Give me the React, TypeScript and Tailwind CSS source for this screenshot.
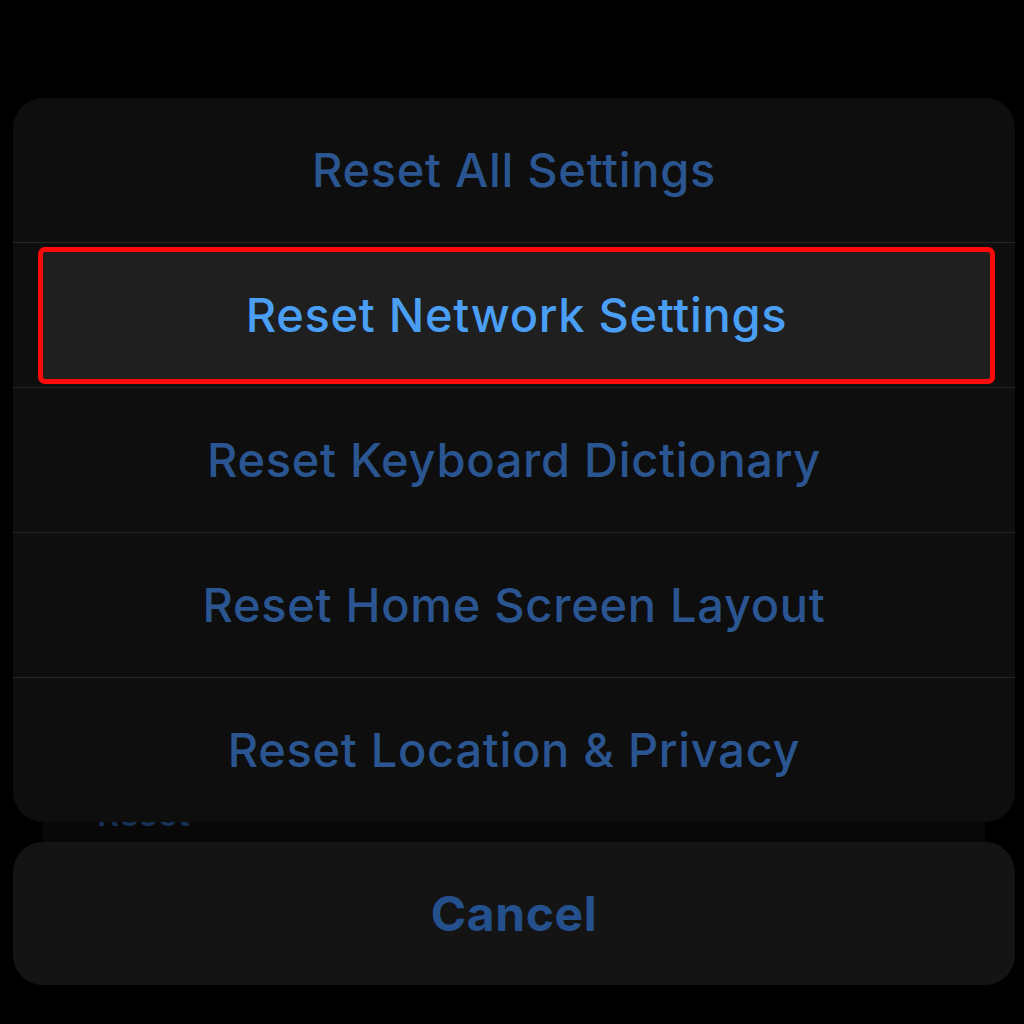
import React from "react";

const rows = [
  "Reset All Settings",
  "Reset Network Settings",
  "Reset Keyboard Dictionary",
  "Reset Home Screen Layout",
  "Reset Location & Privacy",
];

export default function App() {
  return (
    <div
      className="w-[1024px] h-[1024px] bg-black flex flex-col pt-[98px] overflow-hidden"
      style={{ fontFamily: "Inter, 'Noto Sans', sans-serif" }}
    >
      <div className="ml-[13px] mr-[9px] rounded-[30px] bg-[#0e0e0e] overflow-hidden flex flex-col relative z-10">
        {rows.map((r, i) => (
          <React.Fragment key={r}>
            {i > 0 && <div className="h-px bg-[#262626]" />}
            {i === 1 ? (
              <div className="h-[144px] flex pl-[25px] pr-[20px] pt-[4px] pb-[3px]">
                <div className="flex-1 border-[5px] border-[#ff0a0a] rounded-[7px] bg-[#1f1f1f] flex items-center justify-center">
                  <span className="text-[47px] font-medium text-[#4a9ff5] tracking-[0.7px]">{r}</span>
                </div>
              </div>
            ) : (
              <div className="h-[144px] flex items-center justify-center">
                <span className="text-[47px] font-medium text-[#2a5590] tracking-[0.7px]">{r}</span>
              </div>
            )}
          </React.Fragment>
        ))}
      </div>
      <div className="ml-[42px] mr-[39px] h-[20px] bg-[#080808] overflow-hidden relative">
        <div className="absolute left-[55px] top-[-34px] text-[34px] font-semibold text-[#173256]">Reset</div>
      </div>
      <div className="ml-[13px] mr-[9px] h-[143px] rounded-[30px] bg-[#141414] flex items-center justify-center">
        <span className="text-[48px] font-bold text-[#24508e] tracking-[0.6px]">Cancel</span>
      </div>
    </div>
  );
}
